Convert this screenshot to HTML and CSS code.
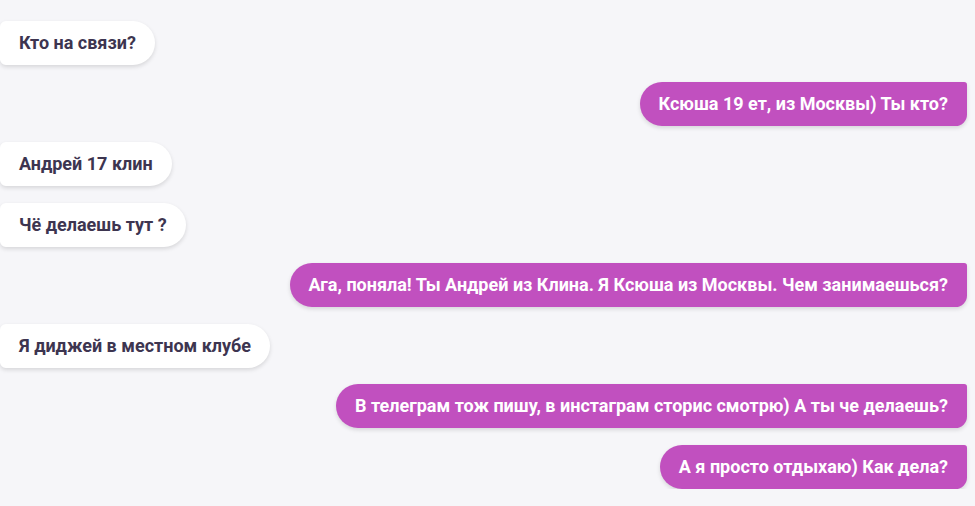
FILE: index.html
```html
<!DOCTYPE html>
<html lang="ru">
<head>
  <meta charset="UTF-8">
  <title>Чат</title>
  <link rel="stylesheet" href="styles.css">
</head>
<body>
<div class="chat">
  <div class="msg in">Кто на связи?</div>
  <div class="msg out">Ксюша 19 ет, из Москвы) Ты кто?</div>
  <div class="msg in">Андрей 17 клин</div>
  <div class="msg in">Чё делаешь тут ?</div>
  <div class="msg out">Ага, поняла! Ты Андрей из Клина. Я Ксюша из Москвы. Чем занимаешься?</div>
  <div class="msg in">Я диджей в местном клубе</div>
  <div class="msg out">В телеграм тож пишу, в инстаграм сторис смотрю) А ты че делаешь?</div>
  <div class="msg out">А я просто отдыхаю) Как дела?</div>
</div>
</body>
</html>
```

FILE: styles.css
```css
body {
  margin: 0;
  background-color: #f6f6f9;
  font-family: Roboto, "Noto Sans", sans-serif;
}

.chat {
  display: flex;
  flex-direction: column;
  gap: 16.5px;
  padding: 21px 8px 0 0;
}

.msg {
  font-size: 18px;
  font-weight: bold;
  line-height: 22px;
  padding: 11px 19px 11px 19px;
  box-shadow: 0 2px 4px rgba(0, 0, 0, 0.13);
}

.in {
  align-self: flex-start;
  background-color: #fff;
  color: #3d3550;
  border-radius: 6px 23px 23px 6px;
}

.out {
  align-self: flex-end;
  background-color: #c150bf;
  color: #fff;
  border-radius: 23px 3px 12px 23px;
}
```
